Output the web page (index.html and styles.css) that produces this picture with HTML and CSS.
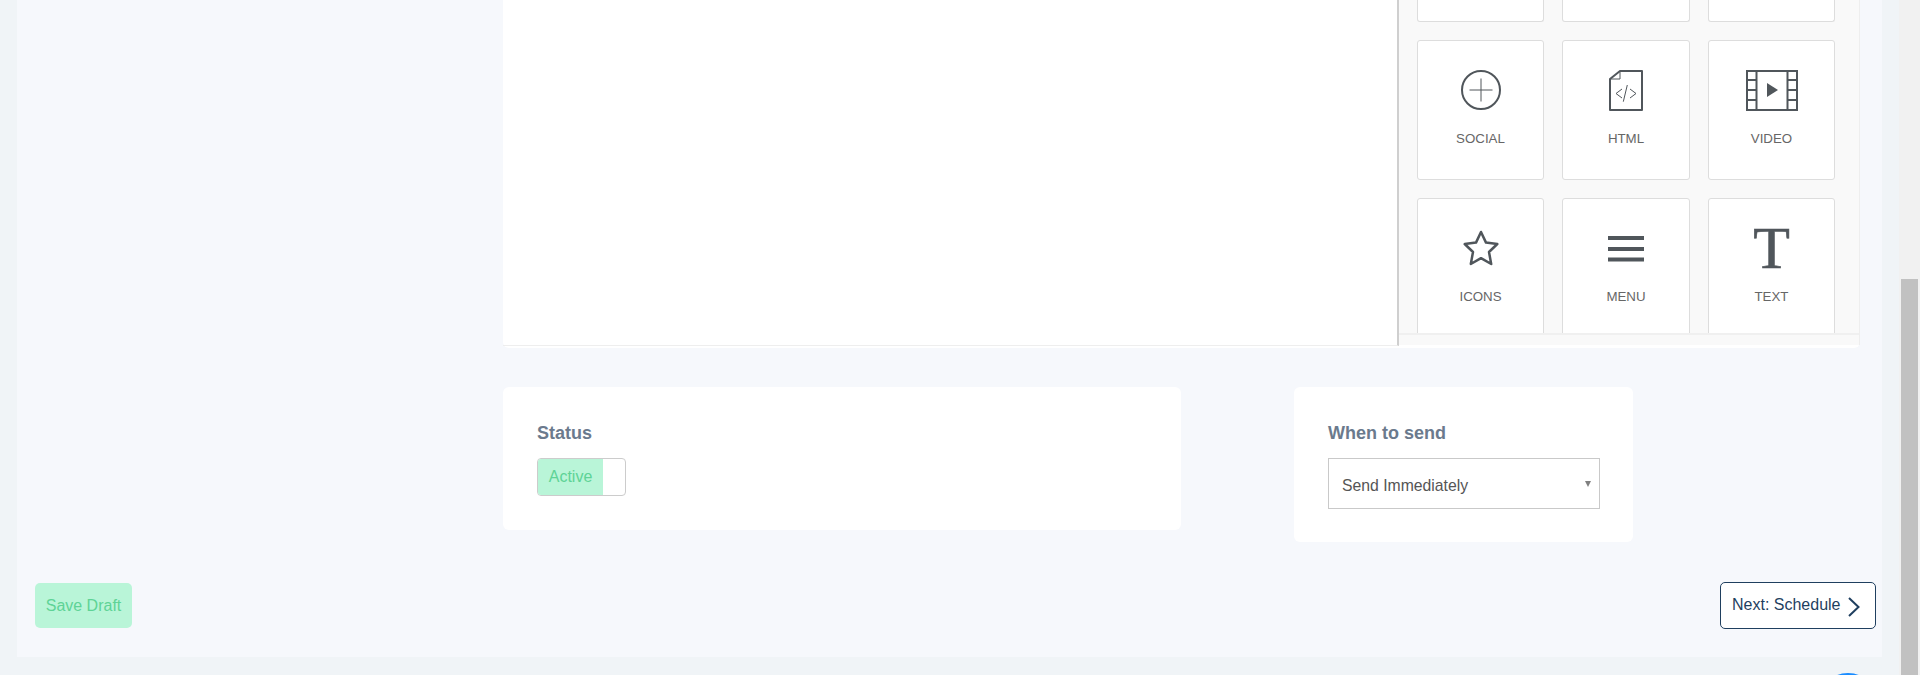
FILE: index.html
```html
<!DOCTYPE html>
<html lang="en">
<head>
  <meta charset="UTF-8">
  <meta name="viewport" content="width=device-width, initial-scale=1.0">
  <title>Edit Campaign</title>
  <link rel="stylesheet" href="styles.css">
</head>
<body>
  <div class="page">
    <div class="main-card">
      <div class="builder">
        <div class="canvas"></div>
        <div class="blocks">
          <div class="block-grid">
            <div class="tile tile-cut"></div>
            <div class="tile tile-cut"></div>
            <div class="tile tile-cut"></div>

            <div class="tile">
              <svg class="tile-icon" width="42" height="42" viewBox="0 0 42 42" fill="none" stroke="#50565b">
                <circle cx="21" cy="21" r="19" stroke-width="2"/>
                <path d="M21 9.500v23M9.500 21h23" stroke-width="1"/>
              </svg>
              <span class="tile-label">SOCIAL</span>
            </div>
            <div class="tile">
              <svg class="tile-icon" width="42" height="42" viewBox="0 0 42 42" fill="none" stroke="#50565b">
                <path d="M15 2h22v39H5V10z" stroke-width="2" stroke-linejoin="round"/>
                <path d="M15 2v8H5" stroke-width="1"/>
                <path d="M17 20l-6 4.500 6 4.500M25 20l6 4.500-6 4.500M22.300 16l-4 16.700" stroke-width="1"/>
              </svg>
              <span class="tile-label">HTML</span>
            </div>
            <div class="tile">
              <svg class="tile-icon" width="52" height="42" viewBox="0 0 52 42" fill="none" stroke="#50565b">
                <rect x="1" y="2" width="50" height="39" stroke-width="2"/>
                <path d="M10.500 2v39M41.500 2v39M1 11h9M1 21h9M1 31h9M42 11h9M42 21h9M42 31h9" stroke-width="2"/>
                <path d="M21 14l11 7-11 7z" fill="#50565b" stroke="none"/>
              </svg>
              <span class="tile-label">VIDEO</span>
            </div>

            <div class="tile">
              <svg class="tile-icon" width="42" height="42" viewBox="0 0 42 42" fill="none" stroke="#50565b">
                <path d="M21 5L26 15.600 37.300 17 29 25 31.200 37 21 31.200 10.800 37 13 25 4.700 17 16 15.600z" stroke-width="2.500" stroke-linejoin="round"/>
              </svg>
              <span class="tile-label">ICONS</span>
            </div>
            <div class="tile">
              <svg class="tile-icon" width="42" height="42" viewBox="0 0 42 42" fill="#50565b">
                <rect x="3" y="9" width="36" height="4"/>
                <rect x="3" y="20" width="36" height="4"/>
                <rect x="3" y="30.500" width="36" height="4"/>
              </svg>
              <span class="tile-label">MENU</span>
            </div>
            <div class="tile">
              <span class="tile-glyph">T</span>
              <span class="tile-label">TEXT</span>
            </div>
          </div>
          <div class="blocks-foot"></div>
        </div>
      </div>

      <div class="settings">
        <div class="panel panel-status">
          <div class="panel-title">Status</div>
          <div class="toggle">
            <span class="toggle-on">Active</span>
          </div>
        </div>
        <div class="panel panel-send">
          <div class="panel-title">When to send</div>
          <div class="select-box">
            <span class="select-text">Send Immediately</span>
            <span class="select-arrow"></span>
          </div>
        </div>
      </div>

      <div class="actions">
        <button class="btn-draft">Save Draft</button>
        <button class="btn-next">
          Next: Schedule
          <svg class="next-arrow" width="12" height="20" viewBox="0 0 12 20" fill="none" stroke="#1f3f5f" stroke-width="2">
            <path d="M1 1l9.500 9L1 19"/>
          </svg>
        </button>
      </div>
    </div>
  </div>

  <div class="scrollbar">
    <div class="scrollbar-thumb"></div>
  </div>

  <div class="chat-bubble"></div>
</body>
</html>
```

FILE: styles.css
```css
body {
  margin: 0;
  height: 675px;
  overflow: hidden;
  display: flex;
  background-color: #f0f4f7;
  font-family: "Liberation Sans", Arial, sans-serif;
  color: #666;
}

.page {
  flex: 1;
  padding-left: 17px;
}

.main-card {
  width: 1865px;
  height: 657px;
  padding-left: 486px;
  box-sizing: border-box;
  background-color: #f6f8fc;
  position: relative;
}

.builder {
  display: flex;
  align-items: flex-start;
  width: 1357px;
  height: 348px;
  background-color: #fff;
  border-radius: 0 0 6px 6px;
}

.canvas {
  width: 896px;
  height: 346px;
  box-sizing: border-box;
  border-right: 2px solid #cfcfcf;
  border-bottom: 1px solid #eee;
}

.blocks {
  flex: 1;
  height: 345px;
  display: flex;
  flex-direction: column;
  background-color: #f9f9f9;
  border-right: 1px solid #eee;
}

.block-grid {
  height: 333px;
  overflow: hidden;
  display: grid;
  grid-template-columns: 127px 128px 127px;
  grid-template-rows: 22px 140px 140px;
  gap: 18px;
  padding-left: 18px;
  box-sizing: border-box;
}

.tile {
  background-color: #fff;
  border: 1px solid #ddd;
  border-radius: 3px;
  display: flex;
  flex-direction: column;
  align-items: center;
  box-sizing: border-box;
}

.tile-cut {
  border-top: 0;
  border-radius: 0 0 3px 3px;
}

.tile-icon {
  margin-top: 28px;
}

.tile-glyph {
  margin-top: 21px;
  height: 49px;
  font-family: "Liberation Serif", serif;
  font-size: 60px;
  line-height: 57px;
  color: #50565b;
  -webkit-text-stroke: 0.6px #50565b;
}

.tile-label {
  margin-top: 20px;
  font-size: 13.300px;
  line-height: 16px;
  color: #666;
}

.blocks-foot {
  flex: 1;
  border-top: 2px solid #f0f0f0;
}

.settings {
  display: flex;
  align-items: flex-start;
  margin-top: 39px;
}

.panel {
  background-color: #fff;
  border-radius: 6px;
  padding: 34px;
  box-sizing: border-box;
}

.panel-status {
  width: 678px;
  height: 143px;
  margin-right: 113px;
}

.panel-send {
  width: 339px;
  height: 155px;
}

.panel-title {
  font-size: 18px;
  font-weight: bold;
  line-height: 24px;
  color: #6b7a8d;
  margin-bottom: 13px;
}

.toggle {
  width: 89px;
  height: 38px;
  border: 1px solid #ccc;
  border-radius: 4px;
  box-sizing: border-box;
  overflow: hidden;
}

.toggle-on {
  display: block;
  width: 65px;
  height: 36px;
  background-color: #b9f5d8;
  color: #5ed396;
  font-size: 16px;
  line-height: 36px;
  text-align: center;
}

.select-box {
  width: 272px;
  height: 51px;
  border: 1px solid #c9c9c9;
  box-sizing: border-box;
  padding: 0 13px;
  display: flex;
  align-items: center;
  justify-content: space-between;
  font-size: 15.750px;
  color: #555;
}

.select-text {
  padding-top: 4px;
}

.select-arrow {
  width: 0;
  height: 0;
  margin: 1px -5px 0 0;
  border-left: 3.500px solid transparent;
  border-right: 3.500px solid transparent;
  border-top: 6px solid #808080;
}

.actions {
  position: absolute;
  left: 18px;
  right: 6px;
  top: 582px;
  display: flex;
  justify-content: space-between;
  align-items: center;
}

.btn-draft {
  width: 97px;
  height: 45px;
  background-color: #b9f5d8;
  border: none;
  border-radius: 5px;
  color: #5ed396;
  font-family: inherit;
  font-size: 16px;
  padding: 0;
}

.btn-next {
  width: 156px;
  height: 47px;
  display: flex;
  align-items: center;
  justify-content: flex-start;
  gap: 7px;
  background-color: #fff;
  border: 1px solid #1f3f5f;
  border-radius: 5px;
  color: #1f3f5f;
  font-family: inherit;
  font-size: 16px;
  padding: 0 0 2px 11px;
}

.next-arrow {
  margin-top: 5px;
}

.scrollbar {
  width: 21px;
  height: 675px;
  background-color: #f1f1f1;
  padding-top: 279px;
  box-sizing: border-box;
}

.scrollbar-thumb {
  width: 17px;
  height: 396px;
  margin-left: 2px;
  background-color: #c1c1c1;
}

.chat-bubble {
  position: fixed;
  left: 1818px;
  top: 673px;
  width: 60px;
  height: 60px;
  border-radius: 50%;
  background-color: #1a8cff;
}
```
